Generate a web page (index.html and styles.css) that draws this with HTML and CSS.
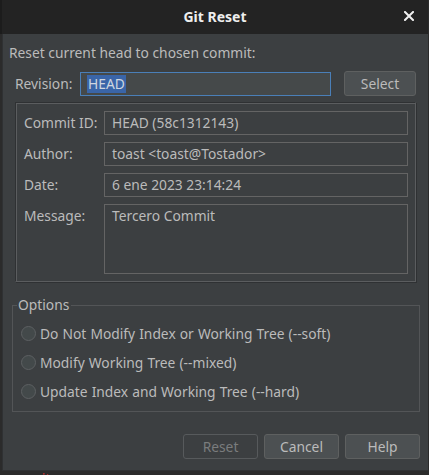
FILE: index.html
```html
<!DOCTYPE html>
<html>
<head>
<meta charset="utf-8">
<link rel="stylesheet" href="styles.css">
</head>
<body>
<div class="window">
  <div class="titlebar">
    <span class="title">Git Reset</span>
    <span class="close">
      <svg width="10" height="10" viewBox="0 0 10 10"><path d="M1 1 L9 9 M9 1 L1 9" stroke="#f0f0f0" stroke-width="2" stroke-linecap="square"/></svg>
    </span>
  </div>
  <div class="body">
    <div class="intro">Reset current head to chosen commit:</div>
    <div class="revrow">
      <span class="revlabel">Revision:</span>
      <div class="revinput"><span class="sel">HEAD</span></div>
      <div class="btn select">Select</div>
    </div>
    <div class="panel">
      <div class="frow"><span class="flabel">Commit ID:</span><div class="field">HEAD (58c1312143)</div></div>
      <div class="frow"><span class="flabel">Author:</span><div class="field">toast &lt;toast@Tostador&gt;</div></div>
      <div class="frow"><span class="flabel">Date:</span><div class="field">6 ene 2023 23:14:24</div></div>
      <div class="frow"><span class="flabel">Message:</span><div class="field msg">Tercero Commit</div></div>
    </div>
    <div class="options">
      <span class="legend">Options</span>
      <div class="radio"><span class="dot"></span>Do Not Modify Index or Working Tree (--soft)</div>
      <div class="radio"><span class="dot"></span>Modify Working Tree (--mixed)</div>
      <div class="radio"><span class="dot"></span>Update Index and Working Tree (--hard)</div>
    </div>
    <div class="buttons">
      <div class="btn disabled">Reset</div>
      <div class="btn">Cancel</div>
      <div class="btn">Help</div>
    </div>
  </div>
</div>
<div class="behind"><span>ommit</span></div>
</body>
</html>
```
FILE: styles.css
```css
html, body {
  margin: 0;
  padding: 0;
}
body {
  background: #2b2b2b;
  width: 429px;
  height: 475px;
  overflow: hidden;
  font-family: "Noto Sans", "DejaVu Sans", sans-serif;
  font-size: 13.8px;
  color: #bbbbbb;
}
.window {
  width: 428px;
  height: 471px;
  display: flex;
  flex-direction: column;
}
.titlebar {
  height: 34px;
  flex: none;
  background: #232323;
  position: relative;
  display: flex;
  align-items: center;
  justify-content: center;
  border-left: 2px solid #1c1c1c;
}
.title {
  font-weight: bold;
  font-size: 14px;
  color: #eeeeee;
  margin-top: -2px;
}
.close {
  position: absolute;
  right: 14px;
  top: 11px;
  line-height: 0;
}
.body {
  flex: 1;
  background: #3c3f41;
  border-left: 1px solid #2f3133;
  margin-left: 2px;
  border-bottom: 1px solid #2f3133;
  padding: 10px 0 0 6px;
  display: flex;
  flex-direction: column;
}
.intro {
  line-height: 17px;
  height: 17px;
}
.revrow {
  display: flex;
  align-items: center;
  margin-top: 10px;
  margin-left: 6px;
  height: 25px;
}
.revlabel {
  width: 65px;
}
.revinput {
  width: 251px;
  height: 24px;
  border: 1px solid #4a7fb8;
  background: #45494a;
  display: flex;
  align-items: center;
  padding-left: 6px;
  box-sizing: border-box;
}
.sel {
  background: #3a65a8;
  color: #cfd6e0;
  line-height: 18px;
  padding: 0 1px;
}
.btn {
  height: 25px;
  box-sizing: border-box;
  border: 1px solid #5e6060;
  border-radius: 3px;
  background: #4c5052;
  display: flex;
  align-items: center;
  justify-content: center;
  color: #bbbbbb;
}
.select {
  width: 72px;
  margin-left: 13px;
}
.panel {
  margin-top: 6px;
  margin-left: 6px;
  width: 401px;
  height: 180px;
  box-sizing: border-box;
  border: 1px solid #5b5d5f;
  border-top-color: #2f3133;
  border-left-color: #2f3133;
  box-shadow: inset 1px 1px 0 #5b5d5f, 1px 1px 0 #2f3133;
  padding: 8px 7px 0 8px;
  display: flex;
  flex-direction: column;
  gap: 7px;
}
.frow {
  display: flex;
  align-items: flex-start;
}
.flabel {
  width: 80px;
  line-height: 23px;
}
.field {
  width: 304px;
  height: 24px;
  box-sizing: border-box;
  border: 1px solid #646464;
  padding: 0 7px;
  line-height: 22px;
}
.msg {
  height: 70px;
  padding-top: 1px;
  line-height: 19px;
}
.options {
  margin-top: 23px;
  margin-left: 3px;
  width: 408px;
  height: 107px;
  box-sizing: border-box;
  border: 1px solid #535557;
  position: relative;
  padding: 17px 0 0 8px;
  display: flex;
  flex-direction: column;
  gap: 8px;
}
.legend {
  position: absolute;
  top: -10px;
  left: 4px;
  background: #3c3f41;
  padding: 0 2px 0 1px;
  line-height: 18px;
}
.radio {
  display: flex;
  align-items: center;
  height: 21px;
  word-spacing: 0.5px;
}
.dot {
  width: 13px;
  height: 13px;
  border: 1px solid #5d6062;
  border-radius: 50%;
  background: #43494a;
  margin-right: 4px;
}
.buttons {
  display: flex;
  justify-content: flex-end;
  gap: 6px;
  margin-top: 22px;
  padding-right: 8px;
}
.buttons .btn {
  width: 75px;
}
.btn.disabled {
  background: #3c3f41;
  color: #7a7c7d;
  border-color: #575a5c;
}
.behind {
  height: 4px;
  overflow: hidden;
  padding-left: 7px;
  color: #d03030;
  font-size: 14px;
  line-height: 14px;
}
.behind span {
  display: block;
  margin-top: 1px;
}
```
